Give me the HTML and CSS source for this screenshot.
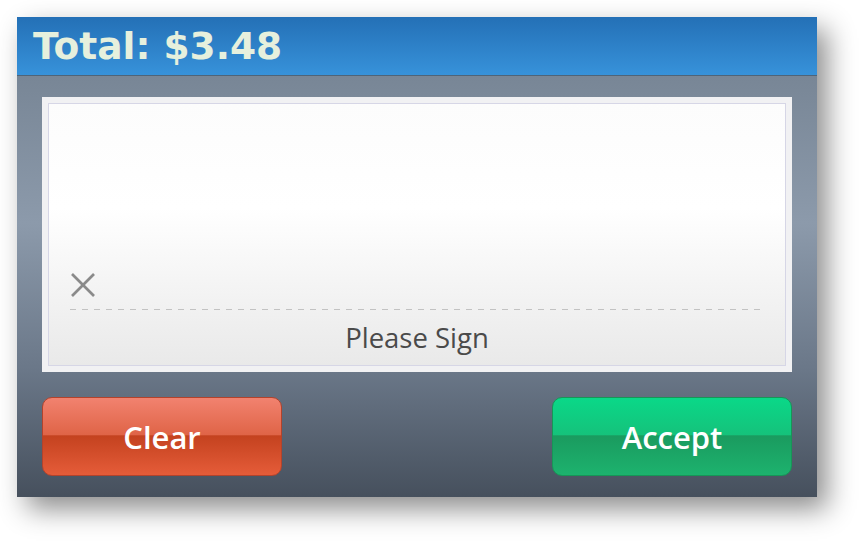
FILE: index.html
```html
<!DOCTYPE html>
<html lang="en">
<head>
  <meta charset="UTF-8">
  <title>Signature</title>
  <link rel="stylesheet" href="styles.css">
</head>
<body>

<div id="terminal">
  <div id="header">
    <h1>Total: $3.48</h1>
  </div>

  <div id="content">
    <div id="signPad">
      <div id="signArea">
        <svg class="signX" width="26" height="26" viewBox="0 0 26 26">
          <line x1="2" y1="2" x2="24" y2="24" />
          <line x1="24" y1="2" x2="2" y2="24" />
        </svg>
        <div class="signLine"></div>
        <p class="signLabel">Please Sign</p>
      </div>
    </div>

    <div id="buttons">
      <button class="btn btnClear">Clear</button>
      <button class="btn btnAccept">Accept</button>
    </div>
  </div>
</div>

</body>
</html>
```

FILE: styles.css
```css
html {
  height: 100%;
}

body {
  margin: 0;
  padding: 17px;
  min-height: 100%;
  box-sizing: border-box;
  background-color: #fff;
  font-family: "Open Sans", "Noto Sans", sans-serif;
}

#terminal {
  width: 800px;
  height: 480px;
  display: flex;
  flex-direction: column;
  box-shadow: 10px 12px 26px rgba(0, 0, 0, 0.45);
}

#header {
  height: 58px;
  background: linear-gradient(#2470b6, #3792da);
  border-bottom: 1px solid #4e6479;
  display: flex;
  align-items: center;
  padding-left: 16px;
}

#header h1 {
  margin: 0;
  font-family: "DejaVu Sans", sans-serif;
  font-weight: bold;
  font-size: 37.5px;
  color: #e6f0dd;
}

#content {
  flex: 1;
  padding: 21px 25px 21px 25px;
  background: linear-gradient(#788696 0%, #8c9aab 35%, #6a7788 70%, #46505d 100%);
  display: flex;
  flex-direction: column;
}

#signPad {
  height: 275px;
  box-sizing: border-box;
  padding: 6px;
  background-color: #f1f1f3;
}

#signArea {
  height: 100%;
  box-sizing: border-box;
  border: 1px solid #d6d6e6;
  background: linear-gradient(#fcfcfc, #ffffff 40%, #e9e9e9);
  display: flex;
  flex-direction: column;
  justify-content: flex-end;
  padding: 0 21px 9px 21px;
}

.signX {
  display: block;
  margin-bottom: 11px;
}

.signX line {
  stroke: #8a8a8a;
  stroke-width: 2.6;
}

.signLine {
  height: 1px;
  background: repeating-linear-gradient(90deg, #c2c2c2 0 6px, transparent 6px 12px);
}

.signLabel {
  margin: 9px 0 0 0;
  text-align: center;
  font-size: 27.5px;
  line-height: 37px;
  color: #4a4a4a;
}

#buttons {
  margin-top: 25px;
  display: flex;
  justify-content: space-between;
}

.btn {
  width: 240px;
  height: 79px;
  border-radius: 10px;
  font-family: "Open Sans", "Noto Sans", sans-serif;
  font-size: 31px;
  font-weight: 600;
  color: #fff;
  cursor: pointer;
  padding: 0;
}

.btnClear {
  border: 1px solid #b3432c;
  background: linear-gradient(#f2826f, #df6447 48%, #c4421f 49%, #e55c39);
}

.btnAccept {
  border: 1px solid #179657;
  background: linear-gradient(#0ad888, #15c27b 48%, #1a9b5f 49%, #1db26e);
}
```
